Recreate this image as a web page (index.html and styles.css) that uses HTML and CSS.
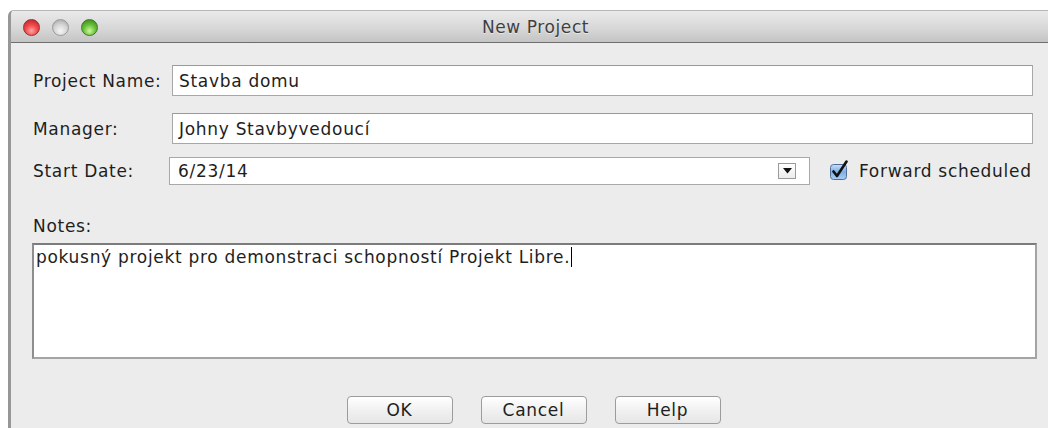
FILE: index.html
```html
<!DOCTYPE html>
<html lang="cs">
<head>
<meta charset="utf-8">
<title>New Project</title>
<link rel="stylesheet" href="styles.css">
</head>
<body>
<div class="window">
  <div class="titlebar">
    <div class="lights">
      <span class="light red"></span>
      <span class="light gray"></span>
      <span class="light green"></span>
    </div>
    <div class="title">New Project</div>
  </div>
  <div class="content">
    <div class="row row-name">
      <span class="label">Project Name:</span>
      <div class="field">Stavba domu</div>
    </div>
    <div class="row row-manager">
      <span class="label">Manager:</span>
      <div class="field">Johny Stavbyvedoucí</div>
    </div>
    <div class="row row-date">
      <span class="label">Start Date:</span>
      <div class="combo">
        <span class="combo-text">6/23/14</span>
        <span class="combo-btn">
          <svg width="9" height="6" viewBox="0 0 9 6"><path d="M0 0H9L4.5 5.5Z" fill="#111"/></svg>
        </span>
      </div>
      <label class="check">
        <svg class="check-box" width="22" height="20" viewBox="0 0 22 20">
          <defs>
            <linearGradient id="cbg" x1="0" y1="0" x2="0" y2="1">
              <stop offset="0" stop-color="#c9def5"/>
              <stop offset="0.5" stop-color="#7eaee6"/>
              <stop offset="1" stop-color="#a9cdf3"/>
            </linearGradient>
          </defs>
          <rect x="1.5" y="4.5" width="16" height="15" rx="3" fill="url(#cbg)" stroke="#4f6f98"/>
          <path d="M4.5 11.5L8 16L17.5 1.5" fill="none" stroke="#111" stroke-width="2.6" stroke-linecap="round" stroke-linejoin="round"/>
        </svg>
        <span class="check-text">Forward scheduled</span>
      </label>
    </div>
    <div class="notes-label">Notes:</div>
    <div class="notes">pokusný projekt pro demonstraci schopností Projekt Libre.<span class="caret"></span></div>
    <div class="buttons">
      <button class="btn" type="button">OK</button>
      <button class="btn" type="button">Cancel</button>
      <button class="btn" type="button">Help</button>
    </div>
  </div>
</div>
</body>
</html>
```
FILE: styles.css
```css
html, body {
  margin: 0;
  padding: 0;
  background: #ffffff;
  overflow: hidden;
}

body {
  font-family: "DejaVu Sans", "Noto Sans", sans-serif;
  font-size: 17px;
  letter-spacing: 0.7px;
  color: #1e1e1e;
}

.window {
  margin: 10px 0 0 8px;
  width: 1052px;
  height: 430px;
  background: #ececec;
  border-left: 3px solid #979797;
  border-top-left-radius: 6px;
  overflow: hidden;
  box-sizing: border-box;
}

.titlebar {
  position: relative;
  height: 33px;
  background: linear-gradient(#eaeaea, #d8d8d8 55%, #c4c4c4);
  border-top: 1px solid #b6b6b6;
  border-bottom: 1px solid #6f6f6f;
  box-sizing: border-box;
  display: flex;
  align-items: center;
  justify-content: center;
}

.lights {
  position: absolute;
  left: 12px;
  top: 8px;
  display: flex;
  gap: 12px;
}

.light {
  width: 17px;
  height: 17px;
  border-radius: 50%;
  box-sizing: border-box;
}

.light.red {
  background: radial-gradient(circle at 50% 72%, #ffa3a3 0, #f04a4c 45%, #b51d20 100%);
  border: 1px solid #9c2a2a;
}

.light.gray {
  background: radial-gradient(circle at 50% 72%, #f6f6f6 0, #d4d4d4 50%, #9e9e9e 100%);
  border: 1px solid #9a9a9a;
}

.light.green {
  background: radial-gradient(circle at 50% 72%, #ccf7a0 0, #6cc23a 45%, #2e7d18 100%);
  border: 1px solid #3d7a22;
}

.title {
  font-size: 17px;
  letter-spacing: 0.6px;
  color: #3f3f3f;
  margin-top: 1px;
  text-shadow: 0 1px 0 rgba(255, 255, 255, 0.5);
}

.content {
  padding: 22px 0 0 22px;
}

.row {
  display: flex;
  align-items: center;
}

.label {
  width: 139px;
  flex: none;
}

.field {
  width: 861px;
  height: 31px;
  box-sizing: border-box;
  background: #ffffff;
  border: 1px solid #a7a7a7;
  border-top-color: #999999;
  padding: 0 6px;
  display: flex;
  align-items: center;
}

.row-manager {
  margin-top: 17px;
}

.row-date {
  margin-top: 13px;
}

.row-date .label {
  width: 136px;
}

.combo {
  width: 641px;
  height: 28px;
  box-sizing: border-box;
  background: #ffffff;
  border: 1px solid #a9a9a9;
  display: flex;
  align-items: center;
  justify-content: space-between;
  padding: 0 13px 0 8px;
}

.combo-btn {
  width: 18px;
  height: 16px;
  box-sizing: border-box;
  border: 1px solid #9a9a9a;
  background: linear-gradient(#ffffff, #ececec);
  display: flex;
  align-items: center;
  justify-content: center;
}

.check {
  display: flex;
  align-items: center;
  margin-left: 19px;
  gap: 8px;
}

.check-box {
  display: block;
  margin-top: -3px;
}

.notes-label {
  margin-top: 31px;
  height: 20px;
  line-height: 20px;
}

.notes {
  margin: 7px 0 0 -1px;
  width: 1005px;
  height: 116px;
  box-sizing: border-box;
  background: #ffffff;
  border: 2px solid #a4a4a4;
  border-top-color: #7c7c7c;
  border-left-color: #8e8e8e;
  padding: 2px 2px;
  line-height: 20px;
}

.caret {
  display: inline-block;
  width: 1px;
  height: 20px;
  background: #000000;
  vertical-align: top;
  margin-left: 1px;
}

.buttons {
  margin-top: 37px;
  display: flex;
  justify-content: center;
  gap: 28px;
  padding-right: 26px;
}

.btn {
  width: 106px;
  height: 28px;
  font-family: inherit;
  font-size: 17px;
  letter-spacing: 0.7px;
  color: #1e1e1e;
  background: linear-gradient(#ffffff, #f1f1f1 50%, #e6e6e6);
  border: 1px solid #9c9c9c;
  border-radius: 4px;
  padding: 0;
}
```
